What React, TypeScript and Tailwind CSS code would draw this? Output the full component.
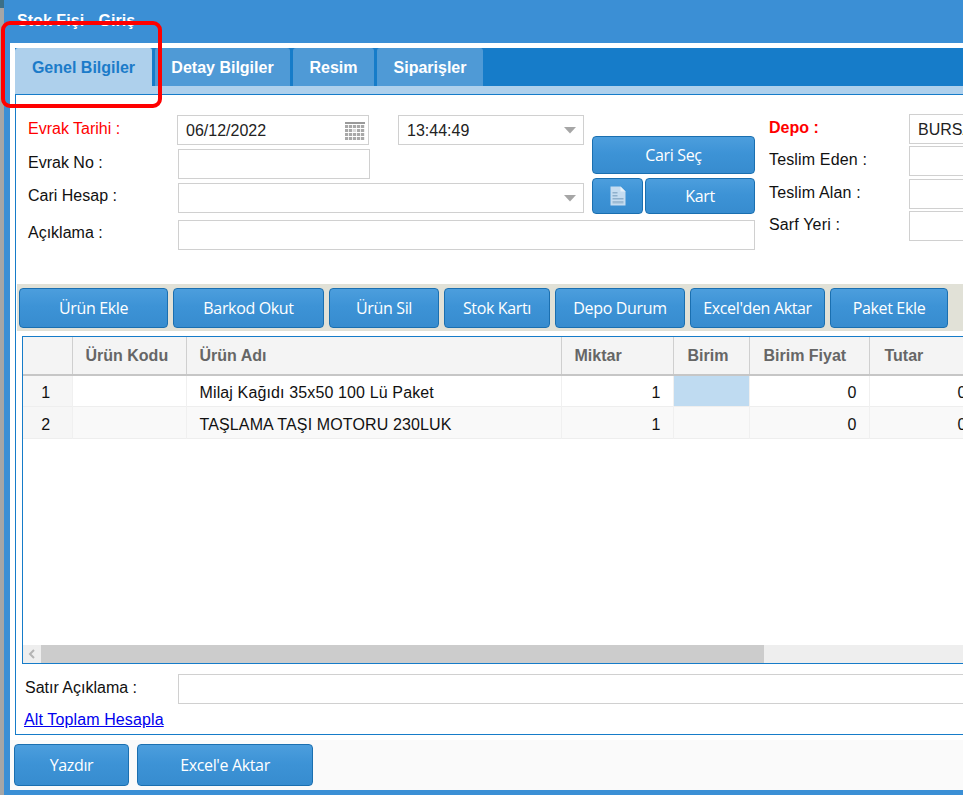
import React from "react";

const btn =
  "flex items-center justify-center rounded-[4px] border border-[#1a6fb0] bg-[linear-gradient(#4c9edd,#3d93d6_45%,#378ccf)] text-white text-[16px] font-['Open_Sans',sans-serif] tracking-[-0.35px]";
const input = "border border-[#d0d0d0] bg-white h-[30px] shrink-0 flex items-center";
const label = "shrink-0 pb-[3px] text-[16px] text-[#111]";
const label2 = "shrink-0 pb-[5px] text-[16px] text-[#111]";

function Caret() {
  return (
    <svg width="14" height="7" viewBox="0 0 14 7" className="ml-auto mr-[6px]">
      <path d="M1 0h12L7 6.5z" fill="#a6a6a6" />
    </svg>
  );
}

function Calendar() {
  return (
    <svg width="20" height="18" viewBox="0 0 20 18" className="ml-auto mr-[3px]">
      <rect x="0" y="0" width="20" height="2" fill="#9a9a9a" />
      {[3, 7, 11, 15].map((y) =>
        [0, 4, 8, 12, 16].map((x) => (
          <rect key={`${x}-${y}`} x={x} y={y} width="3.2" height="3" fill={y === 7 && x === 8 ? "#d8d8d8" : "#a8a8a8"} />
        ))
      )}
    </svg>
  );
}

function DocIcon() {
  return (
    <svg width="16" height="20" viewBox="0 0 16 20">
      <path d="M0.5 0.5h10l5 5v14H0.5z" fill="#c5dcf0" />
      <path d="M10.5 0.5v5h5z" fill="#e8f1f9" />
      <rect x="2.5" y="6" width="5" height="1.5" fill="#8fb0cc" />
      <rect x="2.5" y="9" width="5" height="1.5" fill="#8fb0cc" />
      <rect x="2.5" y="12" width="11" height="1.5" fill="#8fb0cc" />
      <rect x="2.5" y="15" width="11" height="2.5" fill="#9dbbd4" />
    </svg>
  );
}

const tools: [string, number][] = [
  ["Ürün Ekle", 149],
  ["Barkod Okut", 151],
  ["Ürün Sil", 110],
  ["Stok Kartı", 106],
  ["Depo Durum", 130],
  ["Excel'den Aktar", 135],
  ["Paket Ekle", 118],
];

const cols = [49, 114, 375, 112, 76, 120, 110];
const heads = ["", "Ürün Kodu", "Ürün Adı", "Miktar", "Birim", "Birim Fiyat", "Tutar"];
const rows = [
  ["1", "", "Milaj Kağıdı 35x50 100 Lü Paket", "1", "", "0", "0"],
  ["2", "", "TAŞLAMA TAŞI MOTORU 230LUK", "1", "", "0", "0"],
];

export default function App() {
  return (
    <div className="relative flex h-[795px] w-[963px] overflow-hidden bg-[#3b8fd5] font-['Liberation_Sans',Arial,sans-serif]">
      <div className="flex w-[4px] shrink-0 flex-col bg-[#a6a6a6]">
        <div className="h-[8px] bg-[#3b6f88]" />
      </div>
      <div className="flex min-w-0 flex-1 flex-col pb-[5px] pl-[6px]">
        <div className="flex h-[43px] shrink-0 items-start pl-[7px] pt-[12px] text-[16px] font-bold leading-[18px] tracking-[0.05px] text-white">
          Stok Fişi - Giriş
        </div>
        <div className="flex min-h-0 flex-1 flex-col rounded-bl-[4px] bg-white pt-[5px]">
          <div className="ml-[5px] flex h-[38px] shrink-0 items-stretch bg-[#167cc9] pt-0 text-[16px] font-bold">
            <div className="flex w-[138px] items-center justify-center rounded-t-[3px] border-r border-[#167cc9] bg-[#aed0ec] pt-[2px] text-[#1b7bc9]">
              Genel Bilgiler
            </div>
            <div className="ml-[2px] flex w-[135px] items-center justify-center rounded-t-[3px] bg-[#4f9ad6] pt-[2px] text-white">Detay Bilgiler</div>
            <div className="ml-[3px] flex w-[81px] items-center justify-center rounded-t-[3px] bg-[#4f9ad6] pt-[2px] text-white">Resim</div>
            <div className="ml-[3px] flex w-[106px] items-center justify-center rounded-t-[3px] bg-[#4f9ad6] pt-[2px] text-white">Siparişler</div>
          </div>
          <div className="ml-[5px] h-[8px] shrink-0 bg-[#aed0ec]" />
          <div className="ml-[5px] flex h-[641px] shrink-0 flex-col border-y border-l border-[#167cc9]">
            {/* form */}
            <div className="flex h-[189px] shrink-0">
              <div className="ml-[12px] flex w-[727px] shrink-0 flex-col pt-[20px]">
                <div className="flex">
                  <div className="flex w-[556px] shrink-0 flex-col">
                    <div className="flex items-center">
                      <div className={`w-[149px] ${label} !text-[#ff0000]`}>Evrak Tarihi :</div>
                      <div className={`${input} w-[192px] pl-[8px] pt-[1px] text-[16px] text-[#222]`}>
                        06/12/2022
                        <Calendar />
                      </div>
                      <div className={`${input} ml-[29px] w-[186px] pl-[8px] pt-[1px] text-[16px] text-[#222]`}>
                        13:44:49
                        <Caret />
                      </div>
                    </div>
                    <div className="mt-[4px] flex items-center">
                      <div className={`w-[150px] ${label}`}>Evrak No :</div>
                      <div className={`${input} w-[192px]`} />
                    </div>
                    <div className="mt-[4px] flex items-center">
                      <div className={`w-[150px] ${label2}`}>Cari Hesap :</div>
                      <div className={`${input} w-[406px]`}>
                        <Caret />
                      </div>
                    </div>
                  </div>
                  <div className="ml-[8px] flex w-[163px] shrink-0 flex-col pt-[21px]">
                    <div className={`${btn} h-[38px]`}>Cari Seç</div>
                    <div className="mt-[4px] flex h-[36px] gap-[2px]">
                      <div className={`${btn} w-[51px]`}>
                        <DocIcon />
                      </div>
                      <div className={`${btn} flex-1`}>Kart</div>
                    </div>
                  </div>
                </div>
                <div className="mt-[6px] flex items-center">
                  <div className={`w-[150px] ${label2}`}>Açıklama :</div>
                  <div className={`${input} w-[577px]`} />
                </div>
              </div>
              <div className="ml-[14px] flex flex-col pt-[19px]">
                <div className="flex items-center">
                  <div className={`w-[140px] ${label} !text-[#ff0000] font-bold`}>Depo :</div>
                  <div className={`${input} w-[200px] pl-[8px] pt-[1px] text-[16px] text-[#222]`}>BURSA</div>
                </div>
                <div className="mt-[2px] flex items-center">
                  <div className={`w-[140px] ${label} tracking-[0.15px]`}>Teslim Eden :</div>
                  <div className={`${input} w-[200px]`} />
                </div>
                <div className="mt-[3px] flex items-center">
                  <div className={`w-[140px] ${label} tracking-[0.15px]`}>Teslim Alan :</div>
                  <div className={`${input} w-[200px]`} />
                </div>
                <div className="mt-[2px] flex items-center">
                  <div className={`w-[140px] ${label} tracking-[0.15px]`}>Sarf Yeri :</div>
                  <div className={`${input} w-[200px]`} />
                </div>
              </div>
            </div>
            {/* toolbar */}
            <div className="ml-[1px] flex h-[47px] shrink-0 items-center gap-[5px] bg-[#e1e1d7] pl-[2px]">
              {tools.map(([t, w]) => (
                <div key={t} className={`${btn} h-[40px] shrink-0`} style={{ width: w }}>
                  {t}
                </div>
              ))}
            </div>
            {/* table */}
            <div className="ml-[6px] mt-[5px] flex h-[328px] shrink-0 flex-col overflow-hidden border-y border-l border-[#167cc9]">
              <div className="min-h-0 flex-1 overflow-hidden">
                <table className="table-fixed border-collapse" style={{ width: cols.reduce((a, b) => a + b, 0) }}>
                  <colgroup>
                    {cols.map((w, i) => (
                      <col key={i} style={{ width: w }} />
                    ))}
                  </colgroup>
                  <thead>
                    <tr className="h-[38px] border-b-2 border-[#c6c6c6] bg-[#f4f4f4] text-[16px] font-bold text-[#666]">
                      {heads.map((h, i) => (
                        <th
                          key={i}
                          className={`border-r border-[#cfcfcf] text-left font-bold ${i === 1 ? "pl-[13px]" : i === 2 ? "pl-[13px]" : i === 3 ? "pl-[13px]" : i === 4 ? "pl-[14px]" : i === 5 ? "pl-[14px]" : "pl-[15px]"}`}
                        >
                          {h}
                        </th>
                      ))}
                    </tr>
                  </thead>
                  <tbody>
                    {rows.map((r, ri) => (
                      <tr key={ri} className={`border-b border-[#eeeeee] text-[16px] tracking-[0.13px] text-[#111] ${ri === 1 ? "h-[32px] bg-[#f9f9f9]" : "h-[31px] bg-white"}`}>
                        {r.map((c, i) => (
                          <td
                            key={i}
                            className={`border-r border-[#f0f0f0] pt-[5px] ${i === 0 ? "bg-[#f6f6f6] pr-[3px] text-center" : ""} ${i === 2 ? "pl-[13px]" : ""} ${i === 3 || i >= 5 ? "pr-[12px] text-right" : ""} ${ri === 0 && i === 4 ? "bg-[#bfdbf1]" : ""}`}
                          >
                            {c}
                          </td>
                        ))}
                      </tr>
                    ))}
                  </tbody>
                </table>
              </div>
              <div className="flex h-[18px] shrink-0 bg-[#eeeeee]">
                <div className="flex w-[18px] items-center justify-center">
                  <svg width="8" height="10" viewBox="0 0 8 10">
                    <path d="M6 1L2 5l4 4" fill="none" stroke="#b4b4b4" strokeWidth="2" />
                  </svg>
                </div>
                <div className="w-[723px] bg-[#cccccc]" />
              </div>
            </div>
            {/* satır */}
            <div className="ml-[9px] mt-[10px] flex shrink-0 items-center">
              <div className={`w-[153px] ${label}`}>Satır Açıklama :</div>
              <div className={`${input} w-[800px]`} />
            </div>
            <a href="#" className="ml-[8px] mt-[7px] w-fit text-[16px] leading-[18px] tracking-[0.12px] text-[#0000ee] underline">
              Alt Toplam Hesapla
            </a>
          </div>
          <div className="mt-[5px] flex min-h-0 flex-1 items-start gap-[8px] bg-[#fafafa] pl-[4px] pt-[4px]">
            <div className={`${btn} h-[42px] w-[115px]`}>Yazdır</div>
            <div className={`${btn} h-[42px] w-[176px]`}>Excel'e Aktar</div>
          </div>
        </div>
      </div>
      <div className="pointer-events-none absolute left-[1px] top-[21px] h-[87px] w-[161px] rounded-[9px] border-[4px] border-[#ff0000]" />
    </div>
  );
}
